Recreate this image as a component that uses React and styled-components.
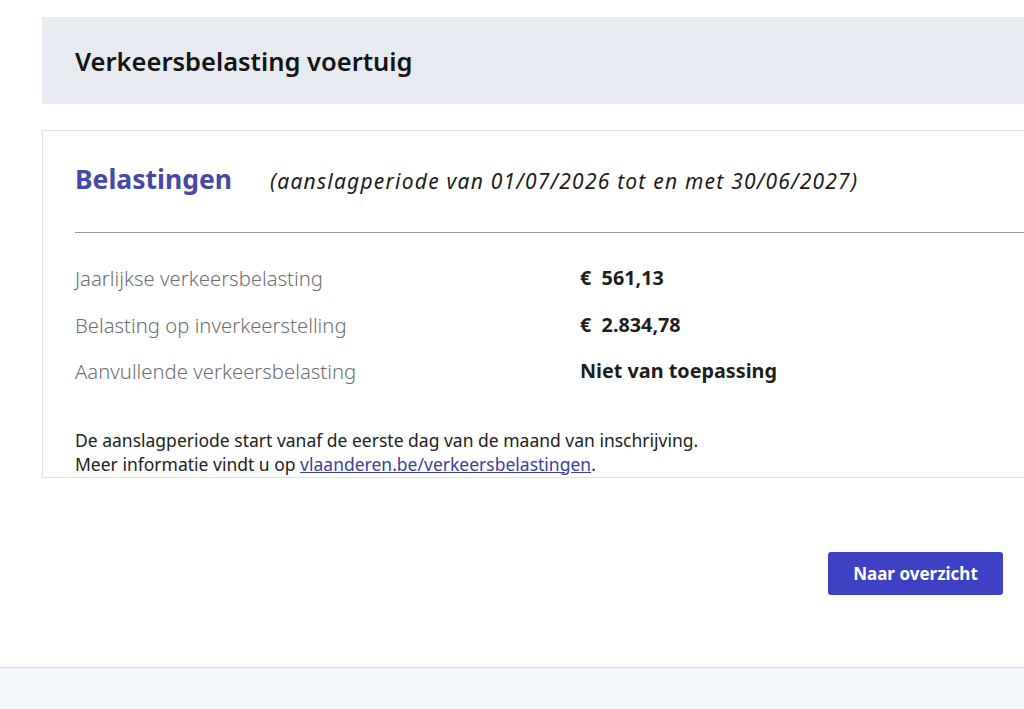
import React from 'react';
import styled, { createGlobalStyle } from 'styled-components';

const GlobalStyle = createGlobalStyle`
  html, body {
    margin: 0;
    padding: 0;
    background: #ffffff;
    overflow: hidden;
  }
  body {
    font-family: "Noto Sans", "Open Sans", sans-serif;
    color: #1f1f1f;
  }
`;

const Page = styled.div`
  width: 1024px;
  height: 709px;
  display: flex;
  flex-direction: column;
  overflow: hidden;
`;

const Main = styled.main`
  flex: 1;
  padding: 17px 0 0 42px;
  display: flex;
  flex-direction: column;
`;

const Inner = styled.div`
  width: 1020px;
  display: flex;
  flex-direction: column;
`;

const Header = styled.div`
  height: 87px;
  background: #e8eaf1;
  display: flex;
  align-items: center;
  padding-left: 33px;

  h1 {
    margin: 0;
    font-size: 25.5px;
    font-weight: 600;
    color: #141414;
  }
`;

const Card = styled.section`
  margin-top: 26px;
  border: 1px solid #e2e2e2;
  border-right: none;
  padding: 0 0 0 32px;
  height: 348px;
  box-sizing: border-box;
`;

const CardHead = styled.div`
  display: flex;
  align-items: baseline;
  gap: 38px;
  height: 102px;
  padding-top: 30px;
  box-sizing: border-box;
  border-bottom: 1px solid #9a9a9a;
`;

const CardTitle = styled.h2`
  margin: 0;
  font-size: 26.5px;
  font-weight: 700;
  color: #4549a8;
`;

const Period = styled.span`
  font-size: 21px;
  font-style: italic;
  letter-spacing: 1.22px;
  color: #1c1c1c;
`;

const Rows = styled.div`
  display: flex;
  flex-direction: column;
  padding-top: 31px;
`;

const Row = styled.div`
  display: grid;
  grid-template-columns: 505px auto;
  height: 46.5px;
  align-items: start;
`;

const Label = styled.span`
  font-size: 20.3px;
  font-weight: 300;
  color: #707070;
`;

const Value = styled.span`
  font-size: 19.8px;
  font-weight: 700;
  color: #1e1e1e;
  white-space: pre;
`;

const Note = styled.p`
  margin: 24px 0 0;
  font-size: 17.5px;
  line-height: 24px;
  color: #222;

  a {
    color: #3b3f9e;
    text-decoration: underline;
  }
`;

const Actions = styled.div`
  display: flex;
  justify-content: flex-end;
  padding: 74px 0 0;
  width: 961px;
`;

const Button = styled.button`
  width: 175px;
  height: 43px;
  background: #3f41c4;
  border: none;
  border-radius: 3px;
  color: #fff;
  font-family: inherit;
  font-size: 17px;
  font-weight: 700;
  cursor: pointer;
`;

const Footer = styled.footer`
  height: 41px;
  border-top: 1px solid #dcdfe4;
  background: #f4f7fc;
`;

const rows = [
  ['Jaarlijkse verkeersbelasting', '€  561,13'],
  ['Belasting op inverkeerstelling', '€  2.834,78'],
  ['Aanvullende verkeersbelasting', 'Niet van toepassing'],
];

export default function App() {
  return (
    <Page>
      <GlobalStyle />
      <Main>
        <Inner>
          <Header>
            <h1>Verkeersbelasting voertuig</h1>
          </Header>
          <Card>
            <CardHead>
              <CardTitle>Belastingen</CardTitle>
              <Period>(aanslagperiode van 01/07/2026 tot en met 30/06/2027)</Period>
            </CardHead>
            <Rows>
              {rows.map(([label, value]) => (
                <Row key={label}>
                  <Label>{label}</Label>
                  <Value>{value}</Value>
                </Row>
              ))}
            </Rows>
            <Note>
              De aanslagperiode start vanaf de eerste dag van de maand van inschrijving.
              <br />
              Meer informatie vindt u op <a href="#">vlaanderen.be/verkeersbelastingen</a>.
            </Note>
          </Card>
        </Inner>
        <Actions>
          <Button>Naar overzicht</Button>
        </Actions>
      </Main>
      <Footer />
    </Page>
  );
}
